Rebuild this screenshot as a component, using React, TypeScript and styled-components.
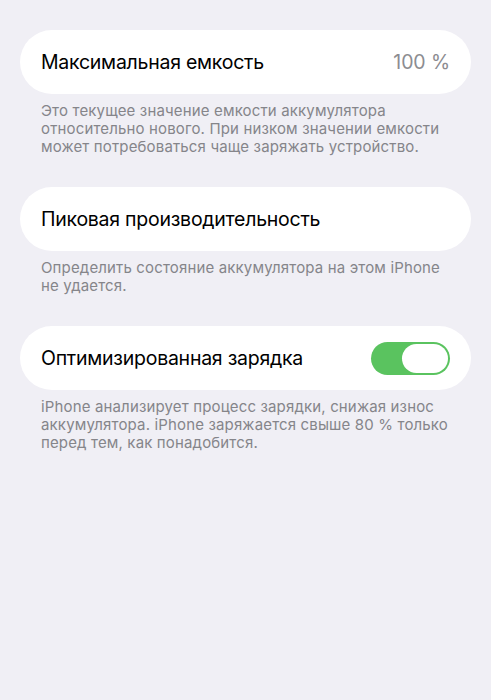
import React from "react";
import styled, { createGlobalStyle } from "styled-components";

const GlobalStyle = createGlobalStyle`
  html, body {
    margin: 0;
    padding: 0;
    background: #f0eff5;
  }
  body {
    font-family: Inter, "Noto Sans", sans-serif;
    -webkit-font-smoothing: antialiased;
  }
`;

const Page = styled.main`
  min-height: 700px;
  box-sizing: border-box;
  padding: 30px 20px 0 20px;
  display: flex;
  flex-direction: column;
  gap: 31px;
`;

const Section = styled.section`
  display: flex;
  flex-direction: column;
  gap: 8px;
`;

const Card = styled.div`
  height: 64px;
  box-sizing: border-box;
  background: #ffffff;
  border-radius: 32px;
  padding: 0 21px;
  display: flex;
  align-items: center;
  justify-content: space-between;
`;

const Label = styled.span`
  font-size: 19.5px;
  color: #000000;
  letter-spacing: -0.25px;
`;

const Value = styled.span`
  font-size: 19.5px;
  color: #8c8c91;
  letter-spacing: -0.1px;
`;

const Note = styled.p`
  margin: 0;
  padding: 0 21px;
  font-size: 15px;
  line-height: 18px;
  letter-spacing: 0.15px;
  color: #85858a;
`;

const Track = styled.div<{ on: boolean }>`
  width: 79px;
  height: 33px;
  box-sizing: border-box;
  border-radius: 17px;
  background: ${({ on }) => (on ? "#5ac35f" : "#e5e5ea")};
  padding: 2px;
  display: flex;
  justify-content: ${({ on }) => (on ? "flex-end" : "flex-start")};
`;

const Knob = styled.div`
  width: 46px;
  height: 29px;
  border-radius: 15px;
  background: #ffffff;
`;

function Toggle({ on }: { on: boolean }) {
  return (
    <Track on={on}>
      <Knob />
    </Track>
  );
}

export default function App() {
  return (
    <>
      <GlobalStyle />
      <Page>
        <Section>
          <Card>
            <Label>Максимальная емкость</Label>
            <Value>100 %</Value>
          </Card>
          <Note>
            Это текущее значение емкости аккумулятора относительно нового. При
            низком значении емкости может потребоваться чаще заряжать
            устройство.
          </Note>
        </Section>
        <Section>
          <Card>
            <Label>Пиковая производительность</Label>
          </Card>
          <Note>
            Определить состояние аккумулятора на этом iPhone не удается.
          </Note>
        </Section>
        <Section>
          <Card>
            <Label>Оптимизированная зарядка</Label>
            <Toggle on />
          </Card>
          <Note>
            iPhone анализирует процесс зарядки, снижая износ аккумулятора.
            iPhone заряжается свыше 80 % только перед тем, как понадобится.
          </Note>
        </Section>
      </Page>
    </>
  );
}
